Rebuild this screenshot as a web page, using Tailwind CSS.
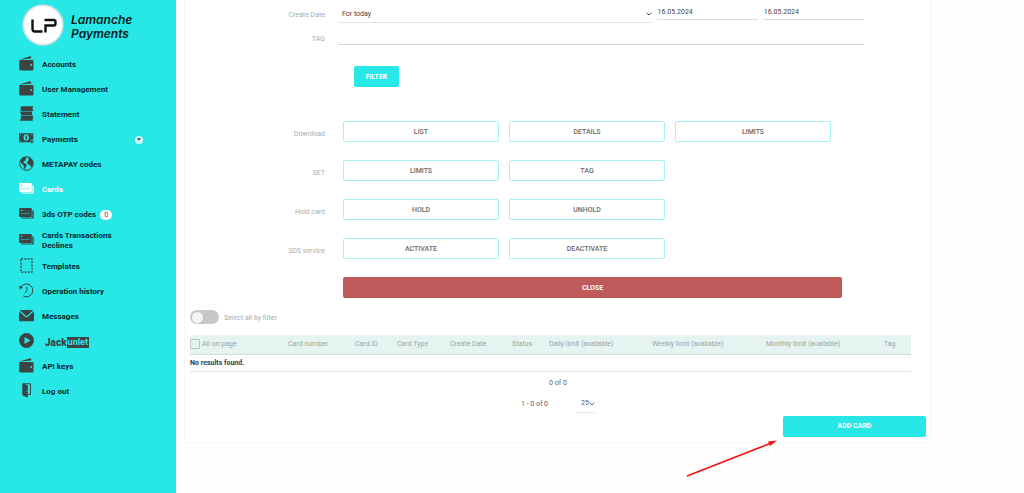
<!DOCTYPE html>
<html lang="en">
<head>
<meta charset="utf-8">
<meta name="viewport" content="width=device-width, initial-scale=1">
<title>Lamanche Payments – Cards</title>
<script src="https://cdn.jsdelivr.net/npm/@tailwindcss/browser@4"></script>
</head>
<body class="relative flex min-h-screen bg-[#fefefe] font-['Roboto',sans-serif] text-[7px] leading-[10px] text-[#444]">

<svg class="hidden" aria-hidden="true">
  <symbol id="wallet" viewBox="0 0 15 15"><path d="M1.200 3.200 11.200.3q.9-.2 1 .7v1.600L1.200 3.500z"/><path fill-rule="evenodd" d="M1 3.900h12.500q1 0 1 1v8.600q0 1-1 1H1.500q-1.200 0-1.200-1V4.700q0-.6.7-.8zM12.200 8.100a.9.9 0 1 0 0 1.800.9.9 0 0 0 0-1.800z"/></symbol>
  <symbol id="statement" viewBox="0 0 15 15"><path d="M2.600.3h12q-1.600 1.600-.9 3.200l.9 1.500H2.300Q.4 3 2.600.3z"/><path d="M.5 5.500h12.600q-.8 2 .8 4H1.600q1-2-1.100-4z"/><path d="M2.300 10h11.200l1 1.400q-1.800 1.500-.6 3.300H.4q1.700-1.800 1.900-4.700z"/></symbol>
  <symbol id="money" viewBox="0 0 15 15"><path fill-rule="evenodd" d="M0 2.200h14.300v6.600h-2.800v2.500H0zM7.200 3.200a2.700 3.300 0 1 0 0 6.600 2.700 3.300 0 0 0 0-6.600zM1 3.200v1.300l1.400-1.300zm0 7h1.400L1 8.900zM13.300 3.200h-1.400l1.400 1.300z"/><path d="M6.600 4.600h1.300v3.800H6.600zM10.800 10.300h1.600V9.100h1v1.200H15v1h-1.600v1.200h-1v-1.200h-1.600z"/></symbol>
  <symbol id="globe" viewBox="0 0 15 15"><circle cx="7.500" cy="7.500" r="6.800" fill="none" stroke="currentColor"/><path d="M1.300 5Q3 1.200 6.800 1l1 1.300-1.500.8.600 1.200-2 .9-.5 1.700 2 .5 1.500 1.600-1.100 1.600-.4 2.700-1.500-1.300-.3-2.700-2-1.600zM9.300 1.300q3.500.8 4.700 4.400l-.3 3.600-1.700 2.300-.8-2.700-2.500-.7-.5-2.400 1.500-1.600z"/></symbol>
  <symbol id="cards" viewBox="0 0 15 15"><path d="M13.300 4.300h.5q.9 0 .9.900v6.500q0 .9-.9.900H3q-.9 0-.9-1h10.300q.9 0 .9-.8z"/><path fill-rule="evenodd" d="M1.200 2h10.600q1 0 1 1v7q0 1-1 1H1.200q-1 0-1-1V3q0-1 1-1zm.6 1.700v1h1.700v-1zM2 7.200v.9h1.400v-.9zm2.300 0v.9h1.400v-.9zm2.300 0v.9H8v-.9zm2.300 0v.9h1.400v-.9z"/></symbol>
  <symbol id="dashed" viewBox="0 0 15 15"><rect x="2" y=".8" width="11" height="13.400" fill="none" stroke="currentColor" stroke-width="1.200" stroke-dasharray="2.200 1.100"/></symbol>
  <symbol id="history" viewBox="0 0 15 15"><path fill="none" stroke="currentColor" stroke-width="1" d="M1.500 5A6.400 6.400 0 1 1 4.300 13M8 3.700v4L5.800 10.300"/><path d="M.2 2.500 4 4.300.9 6.500z"/></symbol>
  <symbol id="mail" viewBox="0 0 15 15"><path d="M0 3.200v9q0 1 1 1h13q1 0 1-1v-9L8.500 9.100q-1 .8-2 0z"/><path d="M.7 2h13.600L8.100 7.700q-.6.500-1.200 0z"/></symbol>
  <symbol id="play" viewBox="0 0 15 15"><path fill-rule="evenodd" d="M7.500.1a7.400 7.400 0 1 0 0 14.800 7.400 7.400 0 0 0 0-14.800zM5.500 4v7l6-3.500z"/></symbol>
  <symbol id="door" viewBox="0 0 15 15"><path fill="none" stroke="currentColor" d="M4 .8h7.500v10.700H8.500"/><path fill-rule="evenodd" d="M3.300.6h1.200L8.800 2.600v12.200L3.300 12.300zM7 7.500v1.300l.6.300V7.800z"/></symbol>
  <symbol id="chevron" viewBox="0 0 6 4"><path d="M.6.700 3 3 5.400.700" fill="none" stroke="currentColor" stroke-width="1"/></symbol>
</svg>

<aside class="w-[176px] shrink-0 bg-[#27e8e7] pt-1">
  <a href="#" class="flex items-center gap-[7px] pl-[22px] text-[#04282a]">
    <svg class="size-[42px] shrink-0" viewBox="0 0 42 42" role="img" aria-label="LP">
      <circle cx="21" cy="21" r="20" fill="#fff" stroke="#c9dede" stroke-width="1.500"/>
      <path d="M10.500 15.500v9.500q0 2.500 2.500 2.500h7.500M23.500 28.500v-7h8q2 0 2-2v-1.500q0-2-2-2h-9" fill="none" stroke="#111" stroke-width="2.400"/>
    </svg>
    <span class="pt-1 font-['Inter',sans-serif] text-[12px] font-semibold italic leading-[14px] text-[#03191a]">Lamanche<br>Payments</span>
  </a>
  <nav class="mt-[6px] pl-[19px] text-[8px] font-bold leading-[10px] text-[#04282a] [&_a>svg]:mb-0.5" aria-label="Main">
    <a href="#" class="flex h-[25px] items-center gap-2"><svg class="size-[15px] fill-current text-[#3d4242]"><use href="#wallet"/></svg>Accounts</a>
    <a href="#" class="flex h-[25px] items-center gap-2"><svg class="size-[15px] fill-current text-[#3d4242]"><use href="#wallet"/></svg>User Management</a>
    <a href="#" class="flex h-[25px] items-center gap-2"><svg class="size-[15px] fill-current text-[#3d4242]"><use href="#statement"/></svg>Statement</a>
    <div class="flex h-[25px] items-center justify-between pr-[33px]">
      <a href="#" class="flex items-center gap-2"><svg class="size-[15px] fill-current text-[#3d4242]"><use href="#money"/></svg>Payments</a>
      <button type="button" aria-label="Expand payments" class="flex size-2 items-center justify-center rounded-full bg-[#d5f5f6] text-[#3d5c70]"><svg class="h-[3px] w-1 fill-current" viewBox="0 0 4 3"><path d="M0 0h4L2 3z"/></svg></button>
    </div>
    <a href="#" class="flex h-[25px] items-center gap-2"><svg class="size-[15px] fill-current text-[#3d4242]"><use href="#globe"/></svg>METAPAY codes</a>
    <a href="#" class="flex h-[25px] items-center gap-2 text-white" aria-current="page"><svg class="size-[15px] fill-current"><use href="#cards"/></svg>Cards</a>
    <a href="#" class="flex h-[25px] items-center gap-2"><svg class="size-[15px] fill-current text-[#3d4242]"><use href="#cards"/></svg><span class="flex items-center gap-1">3ds OTP codes <span class="rounded-full bg-white px-1 text-[7px] font-normal leading-[10px] text-[#335555]">0</span></span></a>
    <a href="#" class="flex h-[27px] items-center gap-2"><svg class="size-[15px] fill-current text-[#3d4242]"><use href="#cards"/></svg><span>Cards Transactions<br>Declines</span></a>
    <a href="#" class="flex h-[25px] items-center gap-2"><svg class="size-[15px] fill-current text-[#3d4242]"><use href="#dashed"/></svg>Templates</a>
    <a href="#" class="flex h-[25px] items-center gap-2"><svg class="size-[15px] fill-current text-[#3d4242]"><use href="#history"/></svg>Operation history</a>
    <a href="#" class="flex h-[25px] items-center gap-2"><svg class="size-[15px] fill-current text-[#3d4242]"><use href="#mail"/></svg>Messages</a>
    <a href="#" class="flex h-[25px] items-center gap-[11px] text-[#3d4242]"><svg class="size-[15px] fill-current"><use href="#play"/></svg><span class="flex items-center pt-0.5 text-[10px] font-black leading-[12px]">Jack<span class="bg-[#3d4242] px-px text-[9px] font-bold leading-[11px] text-[#27e8e7]">unlet</span></span></a>
    <a href="#" class="flex h-[25px] items-center gap-2"><svg class="size-[15px] fill-current text-[#3d4242]"><use href="#wallet"/></svg>API keys</a>
    <a href="#" class="flex h-[25px] items-center gap-2"><svg class="size-[15px] fill-current text-[#3d4242]"><use href="#door"/></svg>Log out</a>
  </nav>
</aside>

<main class="mr-[93px] ml-[8px] flex-1 self-start border-x border-b border-[#f6f6f6] bg-white pr-[4px] pb-[5px] pl-[5px]">
  <form class="pr-[62px]">
    <div class="grid grid-cols-[135px_1fr] gap-x-[13px]">
      <label for="period" class="pt-[10px] text-right text-[#aaa]">Create Date</label>
      <div class="grid h-6 grid-cols-[313fr_101fr_101fr] items-start gap-x-[5px]">
        <div class="relative">
          <select id="period" class="h-[23px] w-full appearance-none border-b border-[#e4e4e4] bg-transparent pt-[5px] pl-1 text-[#444]"><option>For today</option><option>For week</option></select>
          <svg class="pointer-events-none absolute right-0 top-3 h-1 w-1.5 text-[#445566]"><use href="#chevron"/></svg>
        </div>
        <input type="text" aria-label="Date from" value="16.05.2024" class="h-5 w-full min-w-0 border-b border-[#dcdcdc] pt-[5px] pl-px">
        <input type="text" aria-label="Date to" value="16.05.2024" class="h-5 w-full min-w-0 border-b border-[#dcdcdc] pt-[5px] pl-px">
      </div>
      <label for="tag" class="pt-[10px] text-right text-[#aaa]">TAG</label>
      <input id="tag" type="text" class="h-[21px] w-full border-b border-[#d4d4d4]">
    </div>
    <button type="button" class="mt-[21px] ml-[164px] h-[21px] w-[45px] rounded-[2px] bg-[#27e8e7] font-bold text-white">FILTER</button>
  </form>

  <section class="mt-[34px] grid grid-cols-[135px_1fr] gap-x-[18px] gap-y-[18px] pr-[84px]" aria-label="Card actions">
    <div class="pt-[8px] text-right text-[#aaa]">Download</div>
    <div class="mr-[11px] grid grid-cols-3 gap-x-[10px] font-medium text-[#6a6a6a]">
      <button type="button" class="h-[21px] rounded-[2px] border border-[#a5f3f3]">LIST</button>
      <button type="button" class="h-[21px] rounded-[2px] border border-[#a5f3f3]">DETAILS</button>
      <button type="button" class="h-[21px] rounded-[2px] border border-[#a5f3f3]">LIMITS</button>
    </div>
    <div class="pt-[8px] text-right text-[#aaa]">SET</div>
    <div class="mr-[11px] grid grid-cols-3 gap-x-[10px] font-medium text-[#6a6a6a]">
      <button type="button" class="h-[21px] rounded-[2px] border border-[#a5f3f3]">LIMITS</button>
      <button type="button" class="h-[21px] rounded-[2px] border border-[#a5f3f3]">TAG</button>
    </div>
    <div class="pt-[8px] text-right text-[#aaa]">Hold card</div>
    <div class="mr-[11px] grid grid-cols-3 gap-x-[10px] font-medium text-[#6a6a6a]">
      <button type="button" class="h-[21px] rounded-[2px] border border-[#a5f3f3]">HOLD</button>
      <button type="button" class="h-[21px] rounded-[2px] border border-[#a5f3f3]">UNHOLD</button>
    </div>
    <div class="pt-[8px] text-right text-[#aaa]">3DS service</div>
    <div class="mr-[11px] grid grid-cols-3 gap-x-[10px] font-medium text-[#6a6a6a]">
      <button type="button" class="h-[21px] rounded-[2px] border border-[#a5f3f3]">ACTIVATE</button>
      <button type="button" class="h-[21px] rounded-[2px] border border-[#a5f3f3]">DEACTIVATE</button>
    </div>
    <button type="button" class="col-start-2 h-[21px] rounded-[2px] bg-[#be5a5a] font-bold text-white">CLOSE</button>
  </section>

  <label class="relative mt-3 flex items-center gap-[5px] text-[#aaa]">
    <input type="checkbox" role="switch" class="peer sr-only">
    <span class="flex h-[14px] w-[29px] items-center rounded-full bg-[#c8c8c8] px-0.5 peer-checked:justify-end peer-checked:bg-[#27e8e7]"><span class="size-[11px] rounded-full bg-[#f5f5f5]"></span></span>
    <span class="pt-0.5">Select all by filter</span>
  </label>

  <div class="pr-[15px]">
    <table class="mt-[11px] w-full table-fixed border-collapse text-left">
      <thead>
        <tr class="h-[19px] border-b border-[#cfdcda] bg-[#e5f4f1] whitespace-nowrap text-[#9aa5a5]">
          <th class="w-[98px] p-0 font-normal"><label class="flex items-center gap-0.5"><input type="checkbox" class="size-[10px] appearance-none rounded-[1px] border border-[#b9c6c5] checked:bg-[#27e8e7]">All on page</label></th>
          <th class="w-[67px] p-0 font-normal">Card number</th>
          <th class="w-[42px] p-0 font-normal">Card ID</th>
          <th class="w-[53px] p-0 font-normal">Card Type</th>
          <th class="w-[62px] p-0 font-normal">Create Date</th>
          <th class="w-[37px] p-0 font-normal">Status</th>
          <th class="w-[103px] p-0 font-normal">Daily limit (available)</th>
          <th class="w-[114px] p-0 font-normal">Weekly limit (available)</th>
          <th class="w-[118px] p-0 font-normal">Monthly limit (available)</th>
          <th class="w-[27px] p-0 font-normal">Tag</th>
        </tr>
      </thead>
      <tbody>
        <tr class="h-[17px] border-b border-[#e2e2e2]"><td colspan="10" class="p-0 font-bold text-[#2c4254]">No results found.</td></tr>
      </tbody>
    </table>
  </div>

  <div class="mt-[6px] text-center text-[#556070]">0 of 0</div>
  <div class="mt-[6px] flex items-start justify-center gap-7 text-[#556070]">
    <span class="pt-[5px]">1 - 0 of 0</span>
    <span class="relative">
      <select aria-label="Rows per page" class="h-[19px] w-[19px] appearance-none border-b border-[#e2e2e2] bg-transparent pl-[5px]"><option>25</option><option>50</option></select>
      <svg class="pointer-events-none absolute right-0 top-2 h-1 w-1.5"><use href="#chevron"/></svg>
    </span>
  </div>
  <div class="mt-[3px] flex justify-end">
    <button type="button" class="h-[21px] w-[143px] rounded-[2px] bg-[#27e8e7] font-bold text-white">ADD CARD</button>
  </div>
</main>

<svg class="pointer-events-none absolute right-[247px] top-[440px] h-[38px] w-[92px]" viewBox="0 0 92 38" aria-hidden="true">
  <path d="M2 36 85 3.500" stroke="#f81010" stroke-width="1.500" fill="none"/>
  <path d="M92 .5 83 1.500l2 4.500z" fill="#f81010"/>
</svg>
</body>
</html>
